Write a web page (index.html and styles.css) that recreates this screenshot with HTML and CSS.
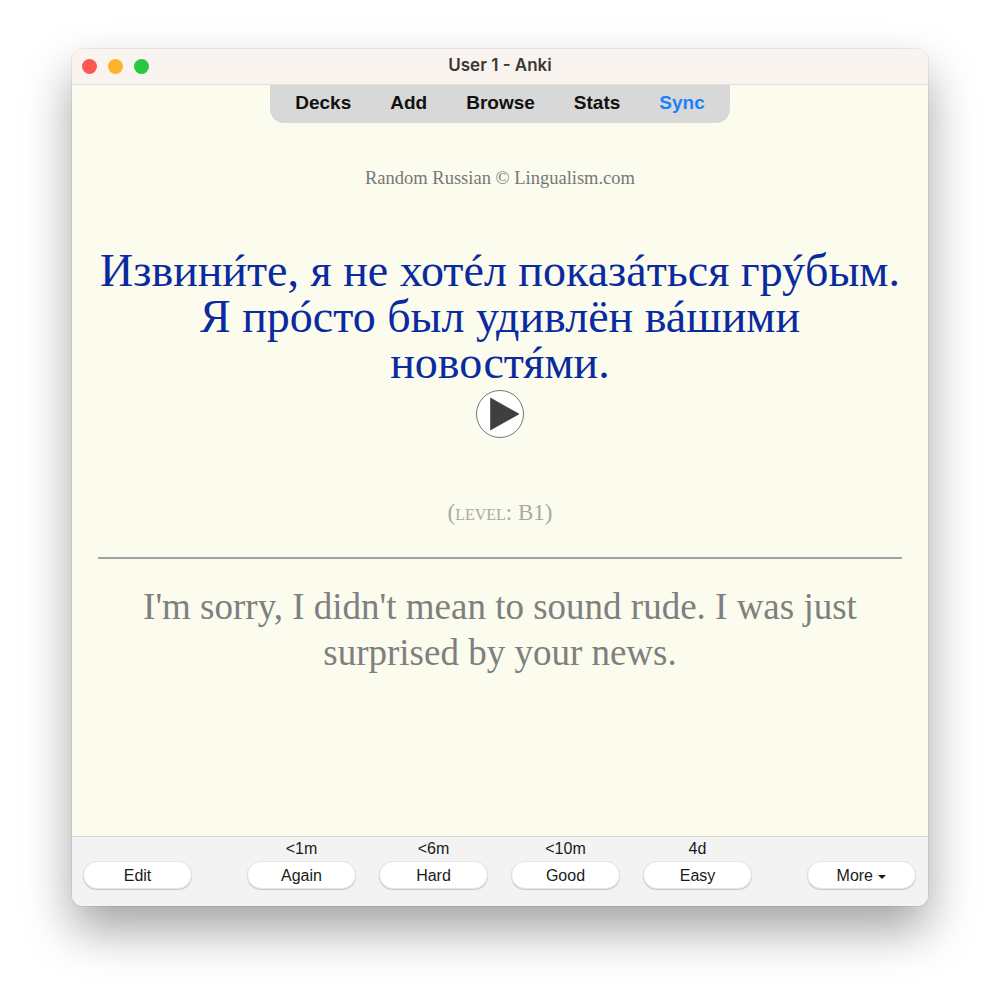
FILE: index.html
```html
<!DOCTYPE html>
<html>
  <head>
    <title>User 1 - Anki</title>
    <link rel="stylesheet" href="styles.css">
  </head>
  <body>
    <div class="window">
      <div class="titlebar">
        <div class="lights">
          <span class="light red"></span>
          <span class="light yellow"></span>
          <span class="light green"></span>
        </div>
        <div class="title">User 1 - Anki</div>
      </div>

      <div class="main">
        <div class="toolbar">
          <a class="tool">Decks</a>
          <a class="tool">Add</a>
          <a class="tool">Browse</a>
          <a class="tool">Stats</a>
          <a class="tool sync">Sync</a>
        </div>

        <div class="card">
          <div class="source">Random Russian © Lingualism.com</div>
          <div class="sentence"><span class="word">Извини<span class="stress">&#769;</span>те,</span> я не <span class="word">хоте<span class="stress">&#769;</span>л</span> <span class="word">показа<span class="stress">&#769;</span>ться</span> <span class="word">гру<span class="stress">&#769;</span>бым.</span> Я <span class="word">про<span class="stress">&#769;</span>сто</span> был удивлён <span class="word">ва<span class="stress">&#769;</span>шими</span> <span class="word">новостя<span class="stress">&#769;</span>ми.</span></div>
          <svg class="play" width="48" height="48" viewBox="0 0 48 48">
            <circle cx="24" cy="24" r="23.5" fill="#fff" stroke="#777" stroke-width="1"/>
            <path d="M14.5 8 L43 24 L14.5 40 Z" fill="#3f3f3f" stroke="#222" stroke-width="0.5"/>
          </svg>
          <div class="level">(<span class="small">level</span>: B1)</div>
          <hr class="divider">
          <div class="answer">I'm sorry, I didn't mean to sound rude. I was just surprised by your news.</div>
        </div>
      </div>

      <div class="bottom">
        <div class="slot">
          <div class="due"></div>
          <button class="btn">Edit</button>
        </div>
        <div class="answers">
          <div class="slot">
            <div class="due">&lt;1m</div>
            <button class="btn">Again</button>
          </div>
          <div class="slot">
            <div class="due">&lt;6m</div>
            <button class="btn">Hard</button>
          </div>
          <div class="slot">
            <div class="due">&lt;10m</div>
            <button class="btn">Good</button>
          </div>
          <div class="slot">
            <div class="due">4d</div>
            <button class="btn">Easy</button>
          </div>
        </div>
        <div class="slot">
          <div class="due"></div>
          <button class="btn">More <span class="caret"></span></button>
        </div>
      </div>
    </div>
  </body>
</html>
```

FILE: styles.css
```css
html, body {
  margin: 0;
  height: 100%;
  background: #fff;
  overflow: hidden;
}
.window {
  width: 856px;
  height: 857px;
  margin: 49px auto 0;
  display: flex;
  flex-direction: column;
  border-radius: 11px;
  overflow: hidden;
  background: #fbfbee;
  box-shadow: 0 0 0 1px rgba(0,0,0,.06), 0 24px 48px rgba(0,0,0,.36);
  font-family: "Liberation Sans", Arial, sans-serif;
}
.titlebar {
  height: 35px;
  flex: none;
  display: flex;
  align-items: center;
  justify-content: center;
  position: relative;
  background: #f9f4ef;
  border-bottom: 1px solid #e4e0da;
}
.lights {
  position: absolute;
  left: 10px;
  top: 10px;
  display: flex;
  gap: 11px;
}
.light {
  width: 15px;
  height: 15px;
  border-radius: 50%;
}
.red { background: #fc5753; }
.yellow { background: #fdb42c; }
.green { background: #28c83f; }
.title {
  font-family: Inter, "Liberation Sans", sans-serif;
  font-size: 17px;
  font-weight: 600;
  color: #3a3735;
  padding-bottom: 3px;
}
.main {
  flex: 1;
  display: flex;
  flex-direction: column;
  align-items: center;
  min-height: 0;
}
.toolbar {
  width: 460px;
  height: 38px;
  flex: none;
  box-sizing: border-box;
  padding-bottom: 2px;
  display: flex;
  align-items: center;
  justify-content: center;
  gap: 39px;
  background: #d8d8d8;
  border-radius: 0 0 14px 14px;
  font-size: 19px;
  font-weight: 700;
  color: #111;
}
.sync { color: #1a82f7; }
.card {
  width: 804px;
  text-align: center;
  font-family: "Liberation Serif", "Times New Roman", serif;
}
.source {
  margin-top: 45px;
  font-size: 18.5px;
  line-height: 20px;
  color: #777;
}
.sentence {
  margin-top: 60px;
  font-size: 46px;
  line-height: 46px;
  color: #0a2aa0;
}
.word {
  white-space: nowrap;
}
/* the font's own mark placement is too high, so the accent runs on its own */
.stress {
  display: inline-block;
  width: 1px;
  margin-left: -1px;
  text-indent: -2px;
  letter-spacing: 1px;
  position: relative;
  top: 8px;
  font-size: 44px;
  line-height: 0;
}
.play {
  display: block;
  margin: 4px auto 0;
}
.level {
  margin-top: 61px;
  font-size: 23px;
  line-height: 28px;
  color: #a8a8a8;
}
.small {
  font-variant: small-caps;
}
.divider {
  margin: 30px 0 0;
  border: none;
  border-top: 2px solid #a3a3a3;
}
.answer {
  margin-top: 25px;
  padding: 0 30px;
  font-size: 37px;
  line-height: 46px;
  color: #7f7f7f;
}
.bottom {
  height: 70px;
  flex: none;
  box-sizing: border-box;
  padding: 4px 12px 0 11px;
  display: flex;
  justify-content: space-between;
  background: #f3f3f3;
  border-top: 1px solid #d6d6d2;
}
.answers {
  display: flex;
  gap: 23px;
}
.slot {
  width: 109px;
  text-align: center;
}
.due {
  height: 16px;
  font-size: 16px;
  line-height: 16px;
  color: #1a1a1a;
  margin-bottom: 4px;
}
.btn {
  width: 109px;
  height: 28px;
  padding: 1px 0 0;
  background: #fff;
  border: 1px solid #e4e4e4;
  border-radius: 14px;
  box-shadow: 0 1px 1px rgba(0,0,0,.18);
  font-family: "Liberation Sans", Arial, sans-serif;
  font-size: 16px;
  color: #1a1a1a;
}
.caret {
  display: inline-block;
  vertical-align: 2px;
  margin-left: 1px;
  border-top: 4px solid #1a1a1a;
  border-left: 4px solid transparent;
  border-right: 4px solid transparent;
}
```
